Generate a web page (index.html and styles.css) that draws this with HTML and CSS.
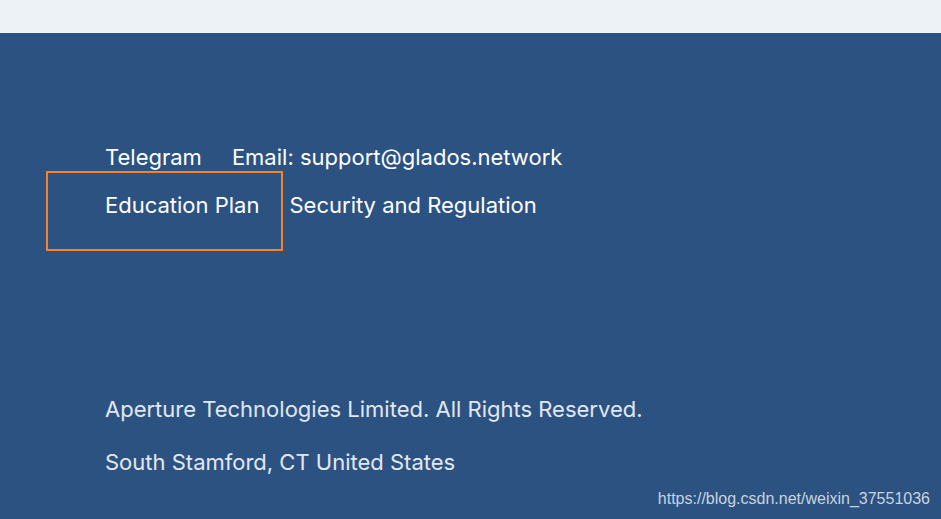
FILE: index.html
```html
<!DOCTYPE html>
<html>
<head>
<meta charset="utf-8">
<link rel="stylesheet" href="styles.css">
</head>
<body>
<div class="topbar"></div>
<footer class="footer">
  <div class="links">
    <div class="row">
      <a class="link">Telegram</a>
      <a class="link">Email: support@glados.network</a>
    </div>
    <div class="row">
      <a class="link highlighted">Education Plan</a>
      <a class="link">Security and Regulation</a>
    </div>
  </div>
  <div class="legal">
    <p>Aperture Technologies Limited. All Rights Reserved.</p>
    <p>South Stamford, CT United States</p>
  </div>
  <span class="watermark">https://blog.csdn.net/weixin_37551036</span>
</footer>
</body>
</html>
```

FILE: styles.css
```css
html, body {
  margin: 0;
  padding: 0;
  height: 100%;
}
body {
  background: #2c5282;
  font-family: Inter, "Noto Sans", sans-serif;
  overflow: hidden;
}
.topbar {
  height: 33px;
  background: #edf2f7;
}
.footer {
  position: relative;
  height: 486px;
  background: #2c5282;
  padding: 0 0 0 105px;
  box-sizing: border-box;
}
.links {
  padding-top: 112px;
  display: flex;
  flex-direction: column;
  gap: 24px;
}
.row {
  display: flex;
  gap: 30px;
  line-height: 24px;
}
.link {
  color: #ffffff;
  font-size: 22px;
  text-decoration: none;
}
.highlighted {
  position: relative;
}
.highlighted::before {
  content: "";
  position: absolute;
  left: -59px;
  top: -22px;
  width: 233px;
  height: 76px;
  border: 2px solid #f6822b;
}
.legal {
  margin-top: 180px;
  color: #e2e8f0;
  font-size: 22px;
}
.legal p {
  margin: 0 0 29px 0;
  line-height: 24px;
}
.watermark {
  position: absolute;
  right: 11px;
  bottom: 11px;
  font-family: "Liberation Sans", Arial, sans-serif;
  font-size: 16px;
  color: #c9d2de;
}
```
